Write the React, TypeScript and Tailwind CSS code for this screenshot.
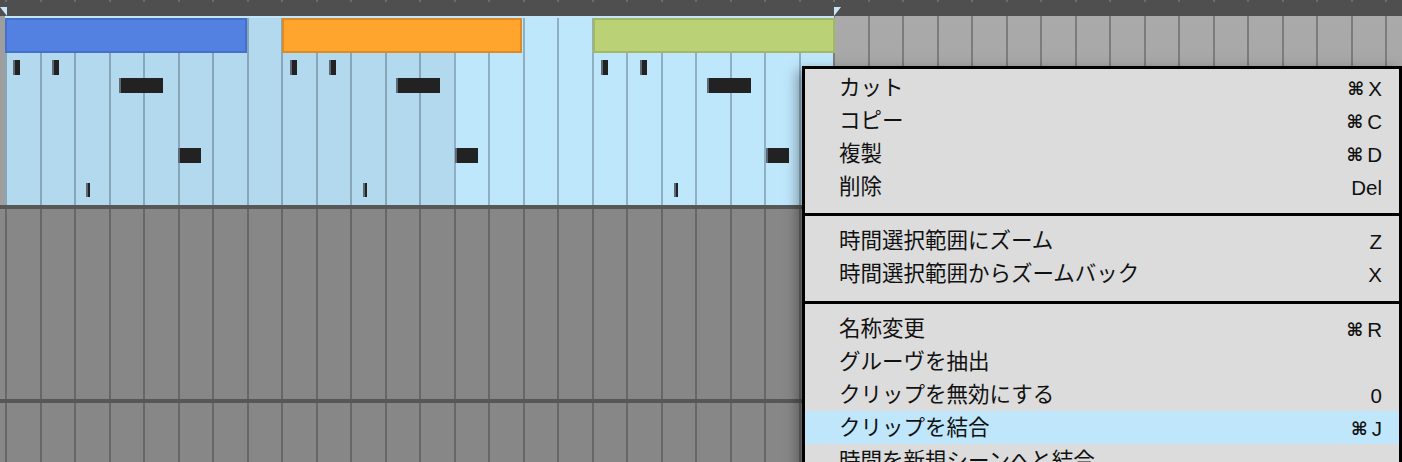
import React from "react";

const COLS = 41;
const SEL_COLS = 24;
const DARK_COLS = 13;

type Clip = { left: number; width: number; bg: string };

const clips: Clip[] = [
  { left: 0, width: 242, bg: "blue" },
  { left: 277, width: 240, bg: "orange" },
  { left: 588, width: 242, bg: "green" },
];

const headerClass: Record<string, string> = {
  blue: "bg-[#5381e1] border-[#4470cc]",
  orange: "bg-[#ffa42d] border-[#dd8b25]",
  green: "bg-[#bbd175] border-[#a3b764]",
};

// note shapes, offsets measured from the clip start
const notes = [
  { x: 8, y: 44, w: 7, h: 15 },
  { x: 47, y: 44, w: 7, h: 15 },
  { x: 114, y: 62, w: 44, h: 15 },
  { x: 173, y: 132, w: 23, h: 15 },
  { x: 81, y: 167, w: 4, h: 14 },
];

type Item = { label: string; key?: string; cmd?: boolean; active?: boolean };

const sections: { items: Item[]; pad: string }[] = [
  {
    pad: "pt-[2px] pb-[10px]",
    items: [
      { label: "カット", key: "X", cmd: true },
      { label: "コピー", key: "C", cmd: true },
      { label: "複製", key: "D", cmd: true },
      { label: "削除", key: "Del" },
    ],
  },
  {
    pad: "pt-[8px] pb-[11px] border-t-[3px] border-black",
    items: [
      { label: "時間選択範囲にズーム", key: "Z" },
      { label: "時間選択範囲からズームバック", key: "X" },
    ],
  },
  {
    pad: "pt-[8px] border-t-[3px] border-black",
    items: [
      { label: "名称変更", key: "R", cmd: true },
      { label: "グルーヴを抽出" },
      { label: "クリップを無効にする", key: "0" },
      { label: "クリップを結合", key: "J", cmd: true, active: true },
      { label: "時間を新規シーンへと結合" },
    ],
  },
];

const Ruler = () => (
  <div className="relative h-[16px] shrink-0 bg-[#4f4f4f] flex">
    <div className="w-[5px] shrink-0" />
    {Array.from({ length: COLS }).map((_, i) => (
      <div key={i} className="w-[34.5px] shrink-0">
        <div className="w-[2px] h-[2px] bg-[#6c6c6c]" />
      </div>
    ))}
    <svg className="absolute left-0 top-[7px]" width="7" height="9" viewBox="0 0 7 9">
      <polygon points="0,0 7,0 7,9" fill="#c6e7fa" />
    </svg>
    <svg className="absolute left-[834px] top-[7px]" width="7" height="9" viewBox="0 0 7 9">
      <polygon points="0,0 7,0 0,9" fill="#c6e7fa" />
    </svg>
  </div>
);

const ClipTrack = () => (
  <div className="relative h-[189px] shrink-0 flex">
    <div className="w-[5px] shrink-0 bg-[#9e9e9e]" />
    {Array.from({ length: COLS }).map((_, i) => {
      let cls = "bg-gradient-to-b from-[#aaaaaa] to-[#a0a0a0] border-[#7c7c7c]";
      if (i < DARK_COLS) cls = "bg-[#b3d9ee] border-[#87a7b9]";
      else if (i < SEL_COLS) cls = "bg-[#bfe7fc] border-[#8fb0c2]";
      return <div key={i} className={`w-[34.5px] shrink-0 border-l-2 ${cls}`} />;
    })}
    <div className="absolute left-[5px] top-0 w-[829px] h-[2px] bg-[#c3e6f8]" />
    {clips.map((c, ci) => (
      <div
        key={ci}
        className="absolute top-[2px] bottom-0"
        style={{ left: 5 + c.left, width: c.width }}
      >
        <div className={`h-[35px] border-2 ${headerClass[c.bg]}`} />
        {notes.map((n, ni) => (
          <div
            key={ni}
            className="absolute bg-[#222222] border-l-2 border-[#5d6a73]"
            style={{ left: n.x, top: n.y - 2, width: n.w, height: n.h }}
          />
        ))}
      </div>
    ))}
  </div>
);

const GrayTrack = ({ h }: { h: string }) => (
  <div className={`flex ${h}`}>
    <div className="w-[5px] shrink-0 bg-[#888888]" />
    {Array.from({ length: COLS }).map((_, i) => (
      <div key={i} className="w-[34.5px] shrink-0 border-l-2 border-[#676767] bg-[#878787]" />
    ))}
  </div>
);

const ContextMenu = () => (
  <div
    className="absolute left-[802px] top-[66px] w-[600px] border-[3px] border-black bg-[#dcdcdc] shadow-[-5px_4px_12px_rgba(0,0,0,0.35)] text-[#111111] text-[21.5px]"
    style={{ fontFamily: '"Liberation Sans","Noto Sans CJK JP","DejaVu Sans",sans-serif' }}
  >
    {sections.map((s, si) => (
      <div key={si} className={s.pad}>
        {s.items.map((it) => (
          <div
            key={it.label}
            className={`h-[33px] flex items-center justify-between pt-[3px] pl-[34px] pr-[17px] leading-none ${
              it.active ? "bg-[#bfe6fa]" : ""
            }`}
          >
            <span>{it.label}</span>
            {it.key && (
              <span className="flex items-center text-[20.5px]">
                {it.cmd && (
                  <span
                    className="text-[18px] font-bold mr-[4px]"
                    style={{ fontFamily: '"DejaVu Sans",sans-serif' }}
                  >
                    ⌘
                  </span>
                )}
                <span>{it.key}</span>
              </span>
            )}
          </div>
        ))}
      </div>
    ))}
  </div>
);

export default function App() {
  return (
    <div className="relative w-[1402px] h-[462px] overflow-hidden bg-[#878787] flex flex-col">
      <Ruler />
      <ClipTrack />
      <div className="h-[4px] shrink-0 bg-[#575757]" />
      <GrayTrack h="h-[190px] shrink-0" />
      <div className="h-[4px] shrink-0 bg-[#575757]" />
      <GrayTrack h="flex-1" />
      <ContextMenu />
    </div>
  );
}
